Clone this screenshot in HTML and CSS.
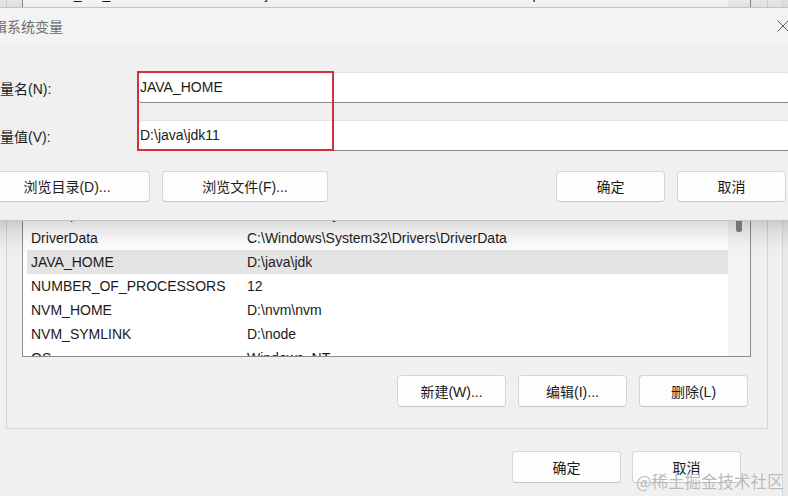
FILE: index.html
```html
<!DOCTYPE html>
<html lang="zh-CN">
<head>
<meta charset="utf-8">
<title>编辑系统变量</title>
<link rel="stylesheet" href="styles.css">
</head>
<body>
<div class="screen">
  <div class="envwin">
    <div class="group">
      <div class="list">
        <div class="rows">
          <div class="row partial"><span class="name">CLION_VM_OPTIONS</span><span class="val">D:\jetbrains\CLion 2023.2\bin\clion64.exe.vmoptions</span></div>
          <div class="row"><span class="name">ChocolateyInstall</span><span class="val">C:\ProgramData\chocolatey</span></div>
          <div class="row"><span class="name">CLASSPATH</span><span class="val">.;%JAVA_HOME%\lib</span></div>
          <div class="row"><span class="name">CMAKE_HOME</span><span class="val">D:\cmake</span></div>
          <div class="row"><span class="name">CUDA_PATH</span><span class="val">C:\Program Files\NVIDIA GPU Computing Toolkit</span></div>
          <div class="row"><span class="name">CUDA_PATH_V11</span><span class="val">C:\Program Files\NVIDIA GPU Computing Toolkit</span></div>
          <div class="row"><span class="name">DATAGRIP_VM_OPTIONS</span><span class="val">D:\jetbrains\DataGrip\bin\datagrip64.exe.vmoptions</span></div>
          <div class="row"><span class="name">GOLAND_VM_OPTIONS</span><span class="val">D:\jetbrains\GoLand\bin\goland64.exe.vmoptions</span></div>
          <div class="row"><span class="name">GRADLE_HOME</span><span class="val">D:\gradle</span></div>
          <div class="row"><span class="name">ComSpec</span><span class="val">C:\Windows\system32\cmd.exe</span></div>
          <div class="row"><span class="name">DriverData</span><span class="val">C:\Windows\System32\Drivers\DriverData</span></div>
          <div class="row selected"><span class="name">JAVA_HOME</span><span class="val">D:\java\jdk</span></div>
          <div class="row"><span class="name">NUMBER_OF_PROCESSORS</span><span class="val">12</span></div>
          <div class="row"><span class="name">NVM_HOME</span><span class="val">D:\nvm\nvm</span></div>
          <div class="row"><span class="name">NVM_SYMLINK</span><span class="val">D:\node</span></div>
          <div class="row"><span class="name">OS</span><span class="val">Windows_NT</span></div>
        </div>
        <div class="scroll"><div class="thumb"></div></div>
      </div>
      <div class="actions">
        <button class="btn">新建(W)...</button>
        <button class="btn">编辑(I)...</button>
        <button class="btn">删除(L)</button>
      </div>
    </div>
    <div class="footer">
      <button class="btn">确定</button>
      <button class="btn">取消</button>
    </div>
  </div>

  <div class="dialog">
    <div class="titlebar">
      <span class="title">编辑系统变量</span>
      <span class="close">
        <svg width="12" height="12" viewBox="0 0 12 12"><path d="M0.5 0.5 L11.5 11.5 M11.5 0.5 L0.5 11.5" stroke="#5a5a5a" stroke-width="1" fill="none"/></svg>
      </span>
    </div>
    <div class="dbody">
      <div class="field">
        <span class="label">变量名(N):</span>
        <div class="input">JAVA_HOME</div>
      </div>
      <div class="field">
        <span class="label">变量值(V):</span>
        <div class="input">D:\java\jdk11</div>
      </div>
      <div class="dbuttons">
        <div class="bgroup">
          <button class="btn wide">浏览目录(D)...</button>
          <button class="btn wide">浏览文件(F)...</button>
        </div>
        <div class="bgroup">
          <button class="btn">确定</button>
          <button class="btn">取消</button>
        </div>
      </div>
    </div>
    <div class="highlight"></div>
  </div>

  <div class="watermark">@稀土掘金技术社区</div>
</div>
</body>
</html>
```

FILE: styles.css
```css
* { box-sizing: border-box; }
html, body { margin: 0; padding: 0; overflow: hidden; }
body {
  font-family: "Liberation Sans", "Noto Sans CJK SC", sans-serif;
  font-size: 14px;
  color: #1b1b1b;
}
.screen {
  position: relative;
  width: 788px;
  height: 496px;
  overflow: hidden;
  background: #e9e9e9;
}
.envwin {
  width: 783px;
  height: 520px;
  margin-top: -14px;
  background: #f0f0f0;
  border-right: 1px solid #d9d9d9;
}
.group {
  margin-left: 6px;
  width: 762px;
  border: 1px solid #d4d4d4;
  border-top: 0;
  padding: 0 19px 21px 15px;
}
.list {
  width: 729px;
  height: 371px;
  display: flex;
  background: #fff;
  border: 1px solid #8c8c8c;
  border-top: 0;
  overflow: hidden;
}
.rows { flex: 1; overflow: hidden; }
.row {
  display: flex;
  height: 24px;
  line-height: 24px;
  margin-left: 4px;
  padding-left: 4px;
  white-space: nowrap;
}
.row.partial { line-height: 16px; }
.row.selected { background: #e4e4e4; }
.name { width: 216px; flex: none; }
.val { flex: 1; }
.scroll {
  width: 22px;
  flex: none;
  background: #f4f4f4;
}
.thumb {
  margin: 150px 0 0 8px;
  width: 6px;
  height: 96px;
  border-radius: 2px;
  background: #858585;
}
.actions {
  display: flex;
  justify-content: flex-end;
  gap: 12px;
  margin-top: 18px;
}
.footer {
  display: flex;
  justify-content: flex-end;
  gap: 11px;
  margin-top: 22px;
  padding-right: 41px;
}
.btn {
  width: 109px;
  height: 32px;
  background: #fdfdfd;
  border: 1px solid #d5d5d5;
  border-bottom-color: #c5c5c5;
  border-radius: 4px;
  font-family: "Liberation Sans", "Noto Sans CJK SC", sans-serif;
  font-size: 14px;
  color: #1b1b1b;
  padding: 0;
  display: flex;
  align-items: center;
  justify-content: center;
}
.btn.wide { width: 166px; }

.dialog {
  position: absolute;
  top: 7px;
  left: -40px;
  width: 846px;
  background: #f0f0f0;
  border: 1px solid #c4c4c4;
  box-shadow: 0 6px 28px rgba(0, 0, 0, 0.22);
}
.titlebar {
  height: 35px;
  background: #f3f3f3;
  display: flex;
  align-items: center;
  justify-content: space-between;
  padding-left: 18px;
}
.title {
  color: #6f6f6f;
  font-size: 14px;
  font-family: "Noto Sans CJK SC", sans-serif;
  line-height: 20px;
}
.close {
  width: 44px;
  height: 35px;
  display: flex;
  align-items: center;
  justify-content: center;
}
.dbody {
  padding: 29px 15px 18px 23px;
  display: flex;
  flex-direction: column;
  gap: 17px;
}
.field {
  display: flex;
  align-items: center;
  height: 31px;
  padding-left: 2px;
}
.label { width: 152px; flex: none; }
.input {
  flex: 1;
  height: 31px;
  line-height: 29px;
  background: #fff;
  border: 1px solid #e3e3e3;
  border-bottom-color: #8a8a8a;
  border-radius: 4px;
  padding-left: 1px;
}
.dbuttons {
  display: flex;
  justify-content: space-between;
  margin-top: 3px;
  padding-right: 4px;
}
.dbuttons .btn { height: 31px; padding-bottom: 2px; }
.bgroup { display: flex; gap: 12px; }
.highlight {
  position: absolute;
  left: 176px;
  top: 63px;
  width: 197px;
  height: 80px;
  border: 2px solid #d0313c;
}
.watermark {
  position: absolute;
  left: 636px;
  top: 469px;
  font-family: "Noto Sans CJK SC", sans-serif;
  font-size: 16.5px;
  line-height: 24px;
  color: rgba(125, 125, 125, 0.55);
  text-shadow: 0 0 1px #fff;
  white-space: nowrap;
}
```
